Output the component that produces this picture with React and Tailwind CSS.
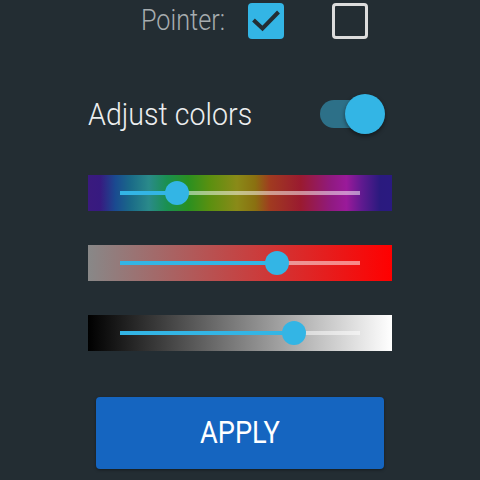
import { useState } from 'react';

const hueGradient =
  'linear-gradient(to right, #3a1a7e 0%, #371a80 4%, #1a4a90 9%, #1a6a88 14%, #2a8a8a 20%, #1a9050 26%, #2a9020 33%, #5a9010 40%, #8a8a18 49%, #8a7010 55%, #a03a20 60%, #9a1a30 70%, #901a80 80%, #9a1a9a 85%, #601a90 90%, #2a1a7e 96%, #2a1a80 100%)';

const Slider = ({ background, value }) => (
  <div className="h-[36px] w-[304px] mx-auto flex items-center px-[32px]" style={{ background }}>
    <div className="relative h-[4px] w-full bg-white/50">
      <div className="absolute left-0 top-0 h-full bg-[#33b5e5]" style={{ width: `${value}%` }} />
      <div
        className="absolute top-1/2 size-[24px] -translate-x-1/2 -translate-y-1/2 rounded-full bg-[#33b5e5]"
        style={{ left: `${value}%` }}
      />
    </div>
  </div>
);

export default function App() {
  const [pointer, setPointer] = useState(true);
  const [other, setOther] = useState(false);
  const [adjust, setAdjust] = useState(true);

  return (
    <div className="w-[480px] h-[480px] bg-[#232d33] flex flex-col overflow-hidden" style={{ fontFamily: 'Roboto, "Noto Sans", sans-serif' }}>
      <div className="mt-[3px] h-[36px] flex items-center pl-[141px]">
        <div className="w-[83px]">
          <span className="inline-block origin-left scale-x-[0.87] whitespace-nowrap text-[29px] font-light leading-none text-[#a6acaf]">
            Pointer:
          </span>
        </div>
        <button
          onClick={() => setPointer(!pointer)}
          className={`ml-[24px] size-[36px] rounded-[4px] ${pointer ? 'bg-[#33b5e5]' : 'border-[3px] border-[#dcdcdc]'}`}
        >
          {pointer && (
            <svg viewBox="0 0 36 36" className="size-[36px]">
              <path d="M5.5 17 L14.5 25.5 L30.5 9" fill="none" stroke="#232d33" strokeWidth="4" />
            </svg>
          )}
        </button>
        <button
          onClick={() => setOther(!other)}
          className={`ml-[48px] size-[36px] rounded-[4px] ${other ? 'bg-[#33b5e5]' : 'border-[3px] border-[#dcdcdc]'}`}
        />
      </div>

      <div className="mt-[55px] h-[40px] w-[304px] mx-auto flex items-center justify-between pr-[7px]">
        <span className="inline-block origin-left scale-x-[0.895] whitespace-nowrap text-[32px] font-light leading-none text-[#eceeef]">
          Adjust colors
        </span>
        <button onClick={() => setAdjust(!adjust)} className="relative w-[65px] h-[40px]">
          <span className="absolute left-0 top-[6px] w-[58px] h-[28px] rounded-full bg-[#2d7088]" />
          <span
            className={`absolute top-0 size-[40px] rounded-full bg-[#33b5e5] shadow-[0_2px_4px_rgba(0,0,0,0.45)] ${adjust ? 'right-0' : 'left-0'}`}
          />
        </button>
      </div>

      <div className="mt-[41px]">
        <Slider background={hueGradient} value={23.75} />
      </div>
      <div className="mt-[34px]">
        <Slider background="linear-gradient(to right, #888888, #ff0000)" value={65.4} />
      </div>
      <div className="mt-[34px]">
        <Slider background="linear-gradient(to right, #000000, #ffffff)" value={72.5} />
      </div>

      <button className="mt-[46px] mx-auto w-[288px] h-[72px] rounded-[4px] bg-[#1565c0] text-white shadow-[0_1px_3px_rgba(0,0,0,0.4)]">
        <span className="inline-block scale-x-[0.85] text-[32px] leading-none">APPLY</span>
      </button>
    </div>
  );
}
